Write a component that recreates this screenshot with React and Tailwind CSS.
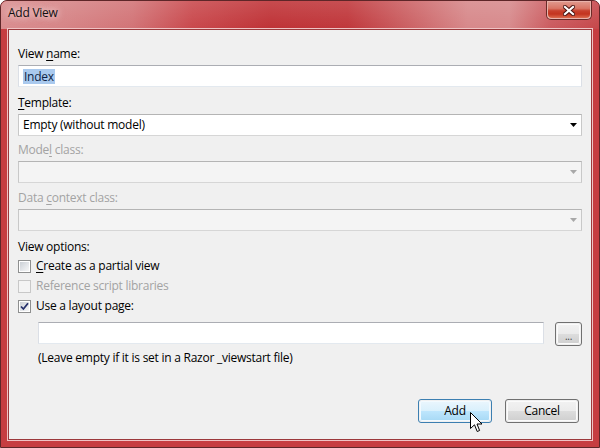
import React from "react";

const Mn = ({ children }) => (
  <span className="underline decoration-1 underline-offset-[2px]">{children}</span>
);

const Label = ({ children, disabled, className = "" }) => (
  <div
    className={`h-[16px] leading-[16px] ${
      disabled ? "text-[#a3a3a3]" : "text-black"
    } ${className}`}
  >
    {children}
  </div>
);

const Arrow = ({ disabled }) => (
  <svg width="7" height="4" viewBox="0 0 7 4" className="mr-[4px]">
    <polygon points="0,0 7,0 3.5,4" fill={disabled ? "#a8a8a8" : "#000"} />
  </svg>
);

const ComboBox = ({ text, disabled }) => (
  <div
    className={`mt-[3px] h-[22px] flex items-center justify-between border border-[#b4b4b4] border-b-[#d6d6d6] border-x-[#c8c8c8] pl-[4px] ${
      disabled ? "bg-[#f4f4f4]" : "bg-white"
    }`}
  >
    <span className="leading-[16px]">{text}</span>
    <Arrow disabled={disabled} />
  </div>
);

const CheckBox = ({ checked, disabled }) => (
  <div
    className={`w-[13px] h-[13px] border p-px ${
      disabled ? "border-[#c8c8c8] bg-[#f4f4f4]" : "border-[#8e8f8f] bg-white"
    }`}
  >
    <div
      className={`w-full h-full flex items-center justify-center ${
        disabled
          ? "bg-[#f4f4f4]"
          : "bg-[linear-gradient(135deg,#cbcfd5_0%,#e6e8eb_60%,#f6f6f6_100%)]"
      }`}
    >
      {checked && (
        <svg width="9" height="9" viewBox="0 0 9 9">
          <path
            d="M1 4.5 L3.4 7 L8 1.2"
            fill="none"
            stroke="#25306b"
            strokeWidth="1.8"
          />
        </svg>
      )}
    </div>
  </div>
);

const CheckRow = ({ checked, disabled, children }) => (
  <div className="h-[20px] flex items-center gap-[5px]">
    <CheckBox checked={checked} disabled={disabled} />
    <span className={disabled ? "text-[#a3a3a3]" : "text-black"}>{children}</span>
  </div>
);

const Button = ({ children, primary, className = "" }) => (
  <div
    className={`h-[24px] rounded-[3px] border p-px ${
      primary ? "border-[#3c7fb1]" : "border-[#707070]"
    } ${className}`}
  >
    <div
      className={`w-full h-full rounded-[2px] flex items-center justify-center text-black ${
        primary
          ? "bg-[linear-gradient(180deg,#eaf6fd_0%,#d9f0fc_50%,#bee6fd_50%,#a7d9f5_100%)] shadow-[inset_0_0_0_1px_#f2faff]"
          : "bg-[linear-gradient(180deg,#f2f2f2_0%,#ebebeb_50%,#dddddd_50%,#cfcfcf_100%)] shadow-[inset_0_0_0_1px_#fbfbfb]"
      }`}
    >
      {children}
    </div>
  </div>
);

const CloseButton = () => (
  <div className="w-[46px] h-[19px] rounded-b-[5px] border border-t-0 border-[#6a2a27] p-px bg-[#e9b2aa]">
    <div className="w-full h-full rounded-b-[4px] flex items-center justify-center bg-[linear-gradient(180deg,#e0968a_0%,#d97565_40%,#c8412d_55%,#c3341f_75%,#db6a4d_100%)]">
      <svg width="12" height="11" viewBox="0 0 12 11">
        <path d="M2 2 L10 9 M10 2 L2 9" stroke="#4a1512" strokeWidth="4.2" strokeLinecap="square" />
        <path d="M2 2 L10 9 M10 2 L2 9" stroke="#ffffff" strokeWidth="2.2" strokeLinecap="square" />
      </svg>
    </div>
  </div>
);

const Cursor = () => (
  <svg width="13" height="21" viewBox="0 0 13 21">
    <path
      d="M0.5 0.5 L0.5 16.5 L4.5 12.8 L7.2 19.5 L9.6 18.5 L7 12 L12 12 Z"
      fill="#fff"
      stroke="#000"
      strokeWidth="1"
      strokeLinejoin="miter"
    />
  </svg>
);

export default function App() {
  return (
    <div className="relative w-[600px] h-[448px] flex flex-col rounded-t-[7px] border border-[#5e2628] bg-[#c63d41] text-[12px] tracking-[-0.25px] font-['Open_Sans',sans-serif] overflow-hidden">
      {/* title bar */}
      <div className="h-[28px] flex items-start justify-between pl-[7px] pr-[7px] bg-[linear-gradient(180deg,rgba(255,255,255,0.12),rgba(255,255,255,0)),linear-gradient(90deg,#d98d8f_0%,#d68587_10%,#d27376_22%,#c9484c_32%,#bf3236_45%,#c0373b_58%,#c9585b_66%,#d7888a_78%,#d78a8c_85%,#cb5a5e_92%,#c6474a_100%)]">
        <div className="pt-[4px] leading-[16px] text-[#111] [text-shadow:0_0_6px_rgba(255,230,230,0.9),0_0_10px_rgba(255,230,230,0.7)]">
          Add View
        </div>
        <CloseButton />
      </div>

      {/* client */}
      <div className="flex-1 mx-[7px] mb-[7px] flex flex-col border border-[#9c393c] shadow-[0_0_0_1px_#efc3c4] bg-[#f0f0f0] pt-[16px] pl-[9px] pr-[9px] pb-[16px]">
        <Label>
          View <Mn>n</Mn>ame:
        </Label>
        <div className="mt-[3px] h-[22px] flex items-center border border-[#abadb3] border-x-[#dbdfe6] border-b-[#e3e9ef] bg-white pl-[4px]">
          <span className="leading-[15px] px-px bg-[#a9c9ee] text-[#0d1f45]">Index</span>
        </div>

        <Label className="mt-[8px]">
          <Mn>T</Mn>emplate:
        </Label>
        <ComboBox text="Empty (without model)" />

        <Label disabled className="mt-[6px]">
          Mode<Mn>l</Mn> class:
        </Label>
        <ComboBox text="" disabled />

        <Label disabled className="mt-[7px]">
          Data <Mn>c</Mn>ontext class:
        </Label>
        <ComboBox text="" disabled />

        <Label className="mt-[8px]">View options:</Label>
        <div className="mt-[1px] flex flex-col">
          <CheckRow>
            <Mn>C</Mn>reate as a partial view
          </CheckRow>
          <CheckRow disabled>Reference script libraries</CheckRow>
          <CheckRow checked>Use a layout page:</CheckRow>
        </div>

        <div className="mt-[6px] pl-[20px] flex gap-[11px]">
          <div className="flex-1 h-[22px] border border-[#abadb3] border-x-[#dbdfe6] border-b-[#e3e9ef] bg-white" />
          <Button className="w-[27px] h-[22px]">
            <span className="text-[10px] leading-[10px] pt-[3px] text-[#444]">...</span>
          </Button>
        </div>
        <div className="mt-[4px] pl-[20px] h-[16px] leading-[16px]">
          (Leave empty if it is set in a Razor _viewstart file)
        </div>

        <div className="mt-auto flex justify-end gap-[13px] pr-[3px]">
          <Button primary className="w-[74px]">Add</Button>
          <Button className="w-[74px]">Cancel</Button>
        </div>
      </div>

      <div className="absolute left-[469px] top-[411px]">
        <Cursor />
      </div>
    </div>
  );
}
